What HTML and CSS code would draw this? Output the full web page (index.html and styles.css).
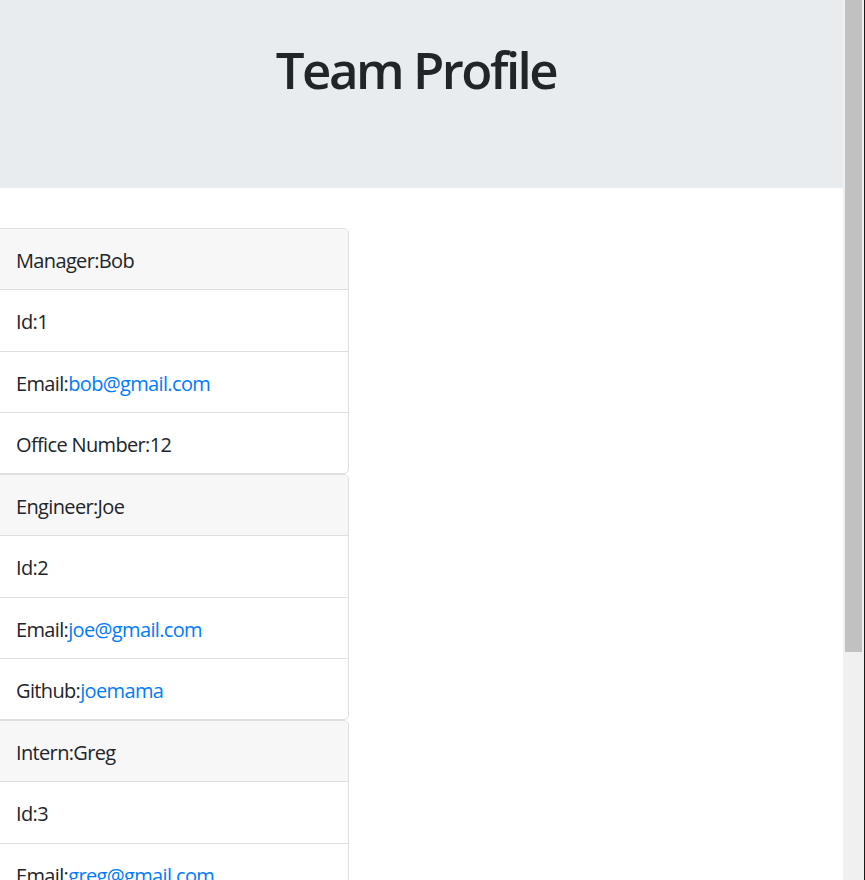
FILE: index.html
```html
<!DOCTYPE html>
<html lang="en">
<head>
<meta charset="utf-8">
<title>Team Profile</title>
<link rel="stylesheet" href="styles.css">
</head>
<body>
<div class="window">
  <div class="page">
    <header class="jumbotron">
      <h1 class="title">Team Profile</h1>
    </header>
    <main class="cards">
      <section class="card">
        <div class="card-header">Manager:Bob</div>
        <ul class="list">
          <li class="item">Id:1</li>
          <li class="item">Email:<a class="link" href="#">bob@gmail.com</a></li>
          <li class="item">Office Number:12</li>
        </ul>
      </section>
      <section class="card">
        <div class="card-header">Engineer:Joe</div>
        <ul class="list">
          <li class="item">Id:2</li>
          <li class="item">Email:<a class="link" href="#">joe@gmail.com</a></li>
          <li class="item">Github:<a class="link" href="#">joemama</a></li>
        </ul>
      </section>
      <section class="card">
        <div class="card-header">Intern:Greg</div>
        <ul class="list">
          <li class="item">Id:3</li>
          <li class="item">Email:<a class="link" href="#">greg@gmail.com</a></li>
          <li class="item">School:UCLA</li>
        </ul>
      </section>
    </main>
  </div>
  <div class="scrollbar"><div class="thumb"></div></div>
</div>
</body>
</html>
```
FILE: styles.css
```css
html, body {
  margin: 0;
  padding: 0;
  height: 880px;
  overflow: hidden;
  background: #fff;
}
body {
  font-family: "Open Sans", "Noto Sans", sans-serif;
  color: #212529;
  font-size: 20px;
}
.window {
  display: flex;
  height: 880px;
}
.page {
  flex: 1;
  min-width: 0;
  overflow: hidden;
}
.jumbotron {
  box-sizing: border-box;
  height: 188px;
  background: #e9ecef;
  padding-top: 39px;
  padding-right: 11px;
  margin-bottom: 40px;
  text-align: center;
}
.title {
  margin: 0;
  font-size: 51px;
  font-weight: 600;
  letter-spacing: -2.5px;
  line-height: 1.2;
}
.cards {
  display: flex;
  flex-direction: column;
  align-items: flex-start;
}
.card {
  box-sizing: border-box;
  width: 360px;
  margin-left: -11px;
  border: 1px solid #dfdfdf;
  border-radius: 5px;
  overflow: hidden;
  background: #fff;
}
.card-header {
  background: #f7f7f7;
  padding: 17px 25px 13px 26px;
  line-height: 30.25px;
  letter-spacing: -0.65px;
  border-bottom: 1px solid #dfdfdf;
}
.list {
  list-style: none;
  margin: 0;
  padding: 0;
}
.item {
  padding: 17px 25px 13px 26px;
  line-height: 30.25px;
  letter-spacing: -0.65px;
  border-bottom: 1px solid #dfdfdf;
}
.item:last-child {
  border-bottom: none;
}
.link {
  color: #007bff;
  text-decoration: none;
}
.scrollbar {
  flex: 0 0 22px;
  box-sizing: border-box;
  background: #f0f0f0;
  padding: 0 2px;
  border-right: 1px solid #1a1a1a;
}
.thumb {
  height: 652px;
  background: #c1c1c1;
}
```
